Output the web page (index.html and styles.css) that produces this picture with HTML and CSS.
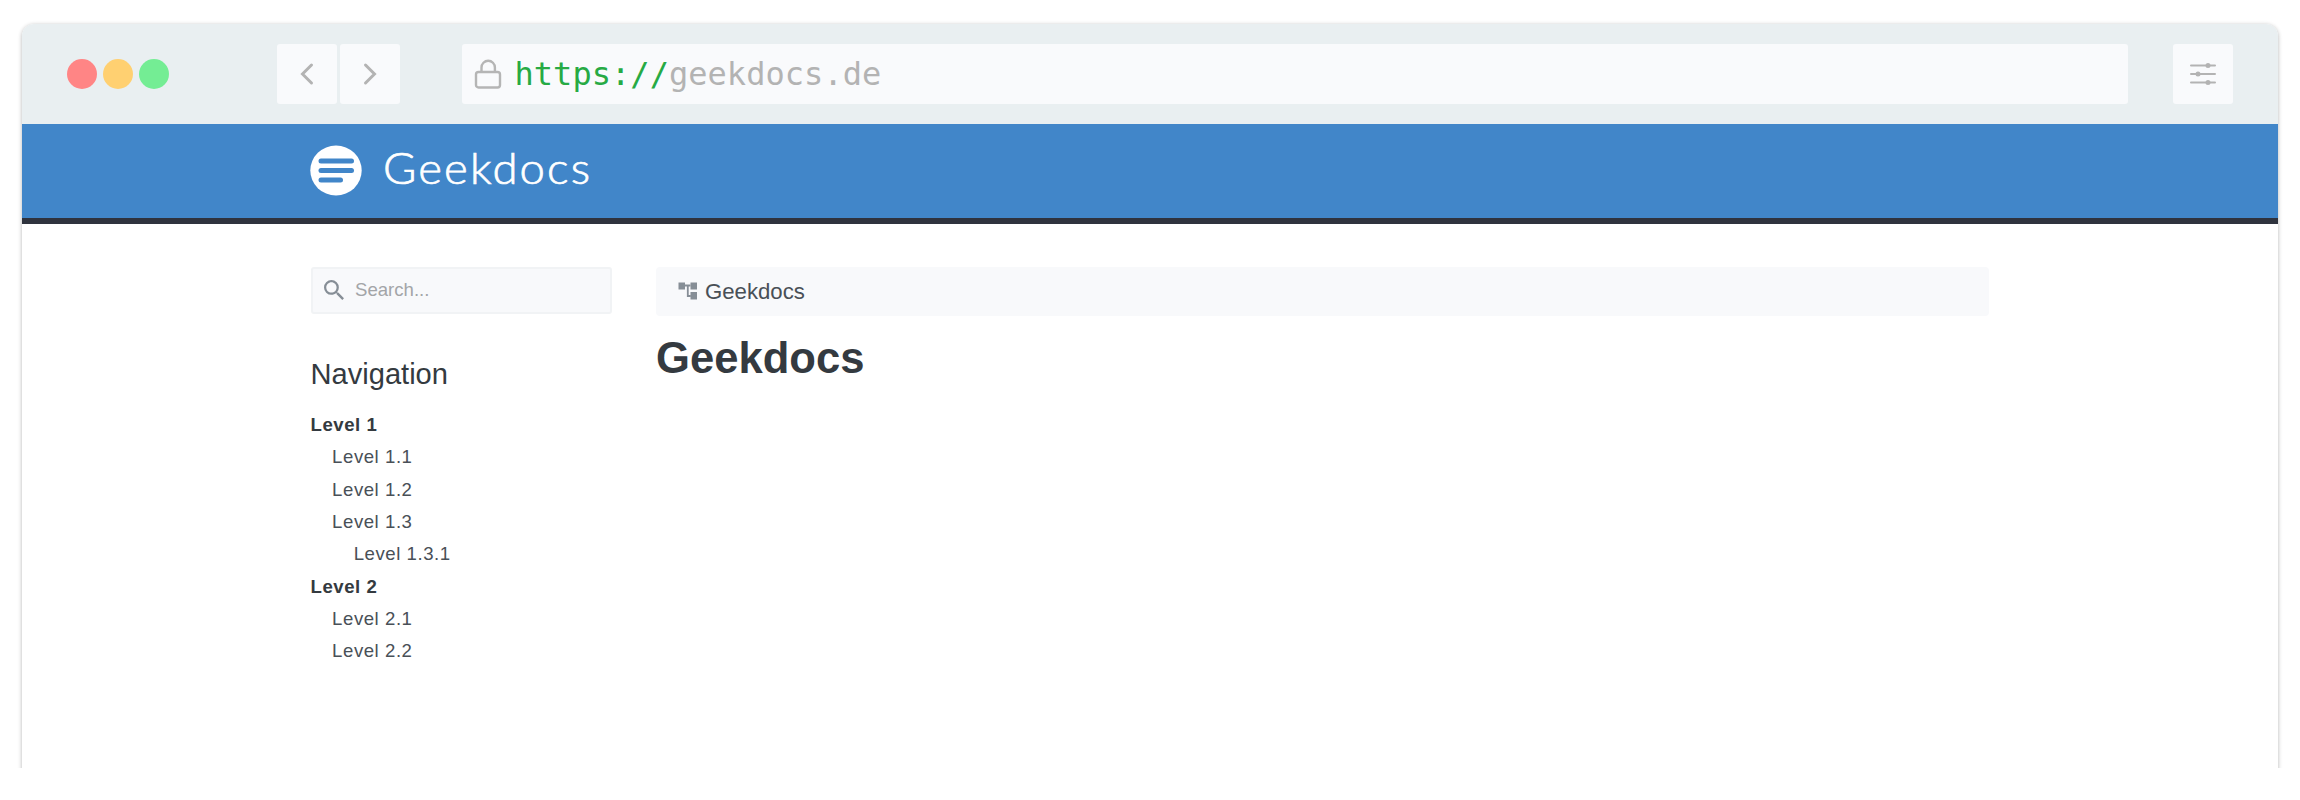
FILE: index.html
```html
<!DOCTYPE html>
<html lang="en">
<head>
<meta charset="utf-8">
<title>Geekdocs</title>
<link rel="stylesheet" href="styles.css">
</head>
<body>
<div class="stage">
<div class="window">
  <div class="chrome">
    <div class="lights"><span class="light red"></span><span class="light yellow"></span><span class="light green"></span></div>
    <div class="history">
      <span class="button"><svg width="60" height="60" fill="none" stroke="#b3b3b3" stroke-width="3" stroke-linecap="round"><path d="M34.5 21 25.500 30l9 9"/></svg></span>
      <span class="button"><svg width="60" height="60" fill="none" stroke="#b3b3b3" stroke-width="3" stroke-linecap="round"><path d="M25.500 21 34.500 30l-9 9"/></svg></span>
    </div>
    <div class="address">
      <svg class="lock" width="28" height="30" fill="none" stroke="#b5b5b5" stroke-width="2.400"><rect x="2" y="13" width="24" height="15.500" rx="2.500"/><path d="M7.500 13V8.500a6.700 6.700 0 0 1 13.400 0V13"/></svg>
      <div class="url"><span class="scheme">https://</span>geekdocs.de</div>
    </div>
    <span class="button settings"><svg width="60" height="60" fill="#b3b3b3" stroke="#b3b3b3" stroke-width="2" stroke-linecap="round"><path d="M18 21.500H42M18 30H42M18 38.500H42"/><g stroke="none"><circle cx="35" cy="21.500" r="2.500"/><circle cx="25" cy="30" r="2.500"/><circle cx="35" cy="38.500" r="2.500"/></g></svg></span>
  </div>
  <header class="header">
    <svg class="logo" width="52" height="51"><ellipse cx="26" cy="25.500" rx="25.700" ry="25" fill="#fff"/><g fill="#4186c9"><rect x="8.500" y="13.500" width="35.500" height="5" rx="2.500"/><rect x="8.500" y="23" width="35.500" height="5" rx="2.500"/><rect x="8.500" y="32.500" width="24.500" height="5" rx="2.500"/></g></svg>
    <span class="brand">Geekdocs</span>
  </header>
  <div class="page">
    <aside class="sidebar">
      <div class="search">
        <svg width="20" height="20" viewBox="3 3 17.500 17.500" fill="#868e96"><path d="M15.500 14h-.79l-.28-.27A6.471 6.471 0 0 0 16 9.500 6.500 6.500 0 1 0 9.500 16c1.610 0 3.090-.59 4.230-1.570l.27.28v.79l5 4.990L20.490 19l-4.990-5zm-6 0C7.010 14 5 11.990 5 9.500S7.010 5 9.500 5 14 7.010 14 9.500 11.990 14 9.500 14z"/></svg>
        <span>Search...</span>
      </div>
      <h2 class="nav-title">Navigation</h2>
      <ul class="nav">
        <li class="section">Level 1
          <ul><li>Level 1.1</li><li>Level 1.2</li><li>Level 1.3<ul><li>Level 1.3.1</li></ul></li></ul>
        </li>
        <li class="section">Level 2
          <ul><li>Level 2.1</li><li>Level 2.2</li></ul>
        </li>
      </ul>
    </aside>
    <main class="main">
      <div class="breadcrumb"><svg width="20" height="18" fill="#868e96"><path d="M.5.5h6.500v7H.5zM12.500.5H19v7h-6.500zM12.500 10H19v7.500h-6.500z"/><path d="M7 3.500h5.500M9.800 3.500v10.500h3" fill="none" stroke="#868e96" stroke-width="1.800"/></svg><span>Geekdocs</span></div>
      <h1 class="title">Geekdocs</h1>
    </main>
  </div>
</div>
</div>
</body>
</html>
```
FILE: styles.css
```css
* { box-sizing: border-box; }
body { margin: 0; background: #fff; font-family: "Liberation Sans", Arial, sans-serif; color: #343a40; }
svg { display: block; flex: none; }
.stage { height: 768px; padding: 24px 22px 0; overflow: hidden; }
.window { height: 780px; background: #fff; border-radius: 12px 12px 0 0; box-shadow: 0 1px 4px rgba(0, 0, 0, .3); }
.chrome { height: 100px; padding: 0 45px; display: flex; align-items: center; background: #e9eff1; border-radius: 12px 12px 0 0; }
.lights { display: flex; gap: 6px; margin-right: 108px; }
.light { width: 30px; height: 30px; border-radius: 50%; }
.red { background: #ff8585; }
.yellow { background: #ffd071; }
.green { background: #74ed94; }
.history { display: flex; gap: 3px; margin-right: 62px; }
.button { width: 60px; height: 60px; border-radius: 3px; background: #f9fafc; }
.address { flex: 1; height: 60px; padding-left: 12px; display: flex; align-items: center; gap: 12.5px; background: #f9fafc; border-radius: 3px; }
.url { font: 32px/59px "DejaVu Sans Mono", monospace; letter-spacing: .04px; color: #b3b3b3; }
.scheme { color: #27aa44; }
.settings { margin-left: 45px; }
.header { height: 100px; padding: 0 288px 1px; display: flex; align-items: center; background: #4186c9; border-bottom: 6px solid #2f333e; }
.brand { margin-left: 21px; padding-bottom: 5px; font: 300 43px/60px Lato, sans-serif; letter-spacing: 2px; color: #fff; -webkit-text-stroke: .7px #fff; transform: scaleX(1.058); transform-origin: left; }
.page { padding: 43px 288px 0 288.5px; display: flex; gap: 44px; }
.sidebar { width: 301.5px; flex: none; }
.search { height: 47px; padding: 0 11px 2px; display: flex; align-items: center; gap: 11.5px; border: 2px solid #f1f3f5; border-radius: 3px; background: #f8f9fb; font-size: 18.6px; color: #a3a5a8; }
.nav-title { margin: 40px 0 0; font-weight: 400; font-size: 29.1px; line-height: 40px; }
.nav { margin: 15px 0 0; font-size: 18.6px; line-height: 32.35px; letter-spacing: .55px; color: #495057; }
.nav, .nav ul { list-style: none; padding: 0; }
.nav ul { padding-left: 21.6px; font-weight: 400; color: #495057; }
.section { font-weight: 700; color: #343a40; }
.main { flex: 1; padding-right: 1px; }
.breadcrumb { height: 49px; padding: 0 22px; display: flex; align-items: center; gap: 7px; border-radius: 4px; background: #f8f9fb; font-size: 22.2px; color: #495057; }
.breadcrumb svg { margin-bottom: 2px; }
.title { margin: 17px 0 0; font-size: 43.6px; line-height: 50px; color: #343a40; }
```
